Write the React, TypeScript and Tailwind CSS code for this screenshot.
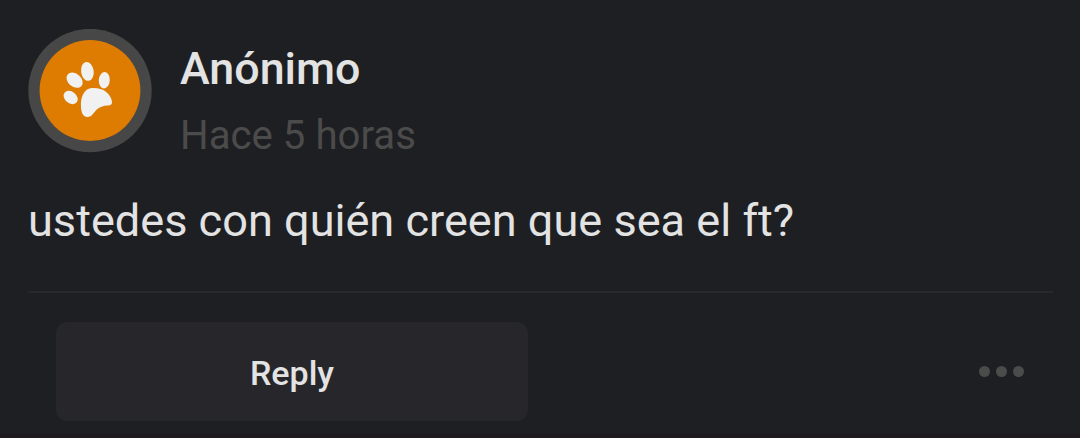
function PawAvatar() {
  return (
    <svg width="124" height="124" viewBox="0 0 124 124" className="shrink-0">
      <circle cx="62" cy="61.5" r="61.7" fill="#474747" />
      <circle cx="62" cy="61.5" r="50.4" fill="#dd7c00" />
      <g fill="#f1f1f1" transform="translate(0 -0.7)">
        <ellipse cx="42.7" cy="69.2" rx="7.8" ry="5.8" transform="rotate(38 42.7 69.2)" />
        <ellipse cx="46.6" cy="51.9" rx="9" ry="6.5" transform="rotate(40 46.6 51.9)" />
        <ellipse cx="59.4" cy="43.1" rx="6.3" ry="9.5" transform="rotate(-8 59.4 43.1)" />
        <ellipse cx="76.3" cy="51.9" rx="5.5" ry="8.2" transform="rotate(4 76.3 51.9)" />
        <path d="M64 59.7C70 59.5 74.5 60.6 78 63.5C81.5 66.4 84 70.5 84 74C84 76.6 82.5 77 80 77.2C75 77.5 71.5 78.5 68.5 81.5C65.5 84.5 64 88.7 59.5 88.7C54.5 88.7 53 83.5 52.9 77C52.8 68 56.5 60 64 59.7Z" />
      </g>
    </svg>
  )
}

export default function App() {
  return (
    <main className="h-[438px] w-full overflow-hidden border-b-4 border-[#1e1a20] bg-[#1e1f22] px-7 pt-[29px] font-['Roboto',sans-serif] text-[#e3e3e3]">
      <header className="flex h-[124px] gap-7">
        <PawAvatar />
        <div className="flex flex-col pt-3">
          <h1 className="text-[44.8px] leading-[56px] font-medium">Anónimo</h1>
          <p className="mt-[15px] text-[40.2px] leading-[48px] text-[#4b4b4b]">Hace 5 horas</p>
        </div>
      </header>

      <p className="mt-10 text-[45.1px] leading-[56px] whitespace-nowrap">
        ustedes con quién creen que sea el ft?
      </p>

      <div className="mt-[42px] -mr-px h-0.5 bg-[#27282b]" />

      <footer className="mt-[29px] flex items-center justify-between px-7">
        <button className="h-[99px] w-[472px] rounded-[11px] bg-[#27262b] pt-1 text-[34px] font-medium">
          Reply
        </button>
        <button aria-label="Más opciones" className="flex gap-[5.5px]">
          <span className="size-[11.5px] rounded-full bg-[#4b4b4b]" />
          <span className="size-[11.5px] rounded-full bg-[#4b4b4b]" />
          <span className="size-[11.5px] rounded-full bg-[#4b4b4b]" />
        </button>
      </footer>
    </main>
  )
}
